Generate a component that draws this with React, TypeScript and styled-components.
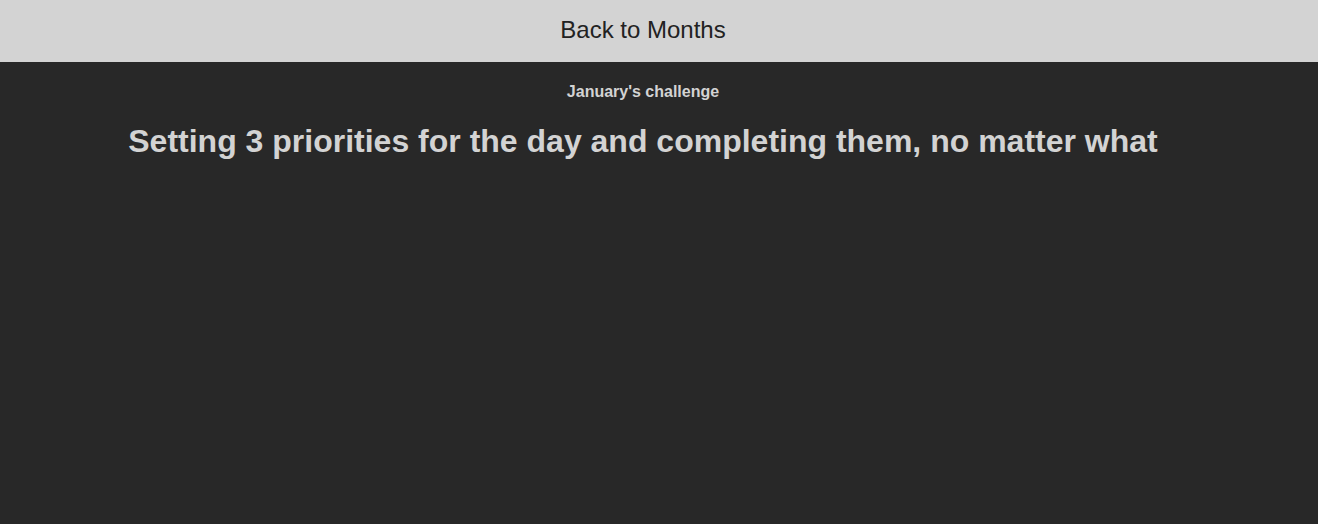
import React from "react";
import styled, { createGlobalStyle } from "styled-components";

const Global = createGlobalStyle`
  html, body { margin: 0; padding: 0; background: #282828; }
  body { font-family: "Liberation Sans", Arial, sans-serif; }
`;

const Page = styled.div`
  min-height: 524px;
  background: #282828;
  display: flex;
  flex-direction: column;
`;

const TopBar = styled.button`
  height: 62px;
  width: 100%;
  border: none;
  margin: 0;
  padding: 0 32px 2px 0;
  background: #d3d3d3;
  color: #222222;
  font-family: "Liberation Sans", Arial, sans-serif;
  font-size: 24px;
  display: flex;
  align-items: center;
  justify-content: center;
  cursor: pointer;
`;

const Content = styled.main`
  display: flex;
  flex-direction: column;
  align-items: center;
  padding-right: 32px;
  color: #d3d3d3;
  text-align: center;
`;

const Subtitle = styled.h3`
  margin: 21px 0 0;
  font-size: 16px;
  font-weight: bold;
  line-height: normal;
`;

const Heading = styled.h1`
  margin: 22px 0 0;
  font-size: 32px;
  font-weight: bold;
  line-height: normal;
`;

export default function App() {
  return (
    <>
      <Global />
      <Page>
        <TopBar>Back to Months</TopBar>
        <Content>
          <Subtitle>January's challenge</Subtitle>
          <Heading>Setting 3 priorities for the day and completing them, no matter what</Heading>
        </Content>
      </Page>
    </>
  );
}
